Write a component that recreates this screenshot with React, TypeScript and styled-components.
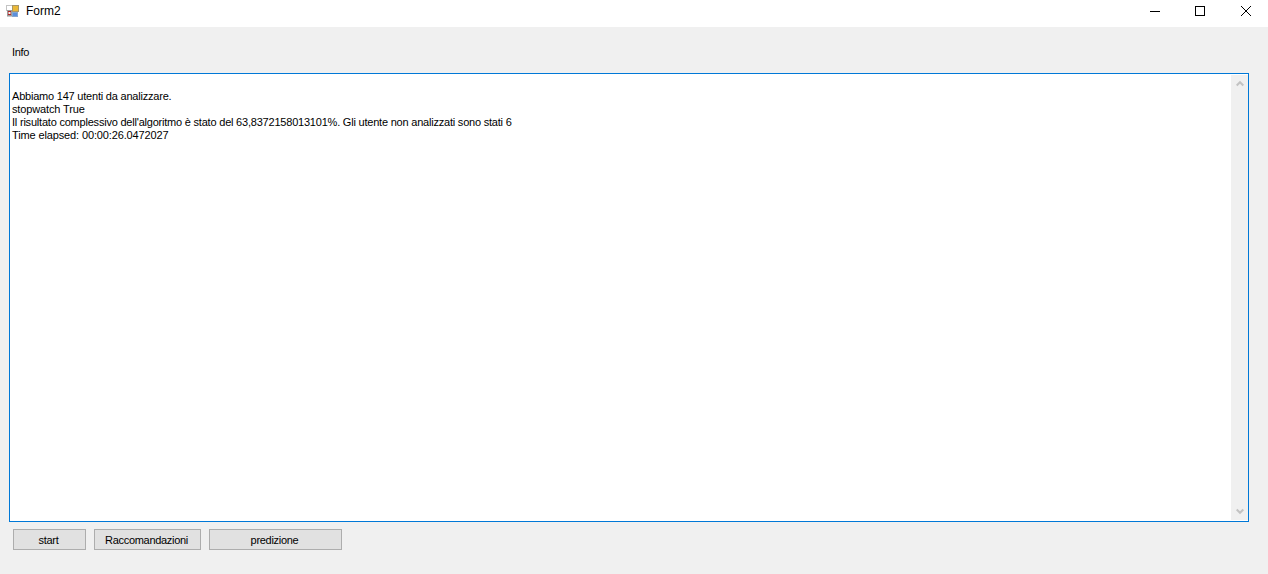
import React from "react";
import styled, { createGlobalStyle } from "styled-components";

const Global = createGlobalStyle`
  html, body { margin: 0; padding: 0; background: #f0f0f0; overflow: hidden; }
  * { box-sizing: border-box; }
`;

const Window = styled.div`
  width: 1268px;
  height: 574px;
  display: flex;
  flex-direction: column;
  background: #f0f0f0;
  font-family: "Liberation Sans", Arial, sans-serif;
  font-size: 11px;
  letter-spacing: -0.2px;
  color: #000;
`;

const TitleBar = styled.header`
  height: 27px;
  flex: none;
  display: flex;
  align-items: flex-start;
  background: #fff;
`;

const AppIcon = styled.svg`
  width: 14px;
  height: 14px;
  margin: 4px 0 0 6px;
  flex: none;
`;

const Title = styled.span`
  margin: 4px 0 0 6px;
  font-size: 12px;
  letter-spacing: 0;
  line-height: 15px;
  flex: 1;
`;

const Controls = styled.div`
  display: flex;
`;

const ControlButton = styled.div<{ $w: number }>`
  width: ${(p) => p.$w}px;
  height: 22px;
  display: flex;
  align-items: center;
  justify-content: center;
`;

const Content = styled.main`
  flex: 1;
  display: flex;
  flex-direction: column;
  padding: 19px 19px 0 9px;
`;

const MenuLabel = styled.div`
  padding-left: 3px;
  line-height: 13px;
  height: 27px;
  letter-spacing: -0.3px;
`;

const TextArea = styled.div`
  height: 449px;
  width: 1240px;
  flex: none;
  border: 1px solid #0078d7;
  background: #fff;
  display: flex;
`;

const Output = styled.div`
  flex: 1;
  padding: 16px 0 0 2px;
`;

const Line = styled.div<{ $tight?: boolean }>`
  line-height: 13px;
  white-space: pre;
  letter-spacing: ${(p) => (p.$tight ? "-0.13px" : "-0.21px")};
`;

const ScrollTrack = styled.div`
  width: 17px;
  margin: 1px 0;
  background: #f0f0f0;
  display: flex;
  flex-direction: column;
  justify-content: space-between;
`;

const ScrollArrow = styled.div`
  height: 17px;
  display: flex;
  align-items: center;
  justify-content: center;
`;

const ButtonRow = styled.div`
  display: flex;
  gap: 8px;
  margin: 7px 0 0 4px;
`;

const FormButton = styled.button<{ $w: number }>`
  width: ${(p) => p.$w}px;
  height: 21px;
  padding: 1px 2px 0 0;
  border: 1px solid #adadad;
  background: #e1e1e1;
  font: inherit;
  letter-spacing: -0.3px;
  color: #000;
  line-height: 18px;
  text-align: center;
`;

const Chevron = ({ up }: { up?: boolean }) => (
  <svg width="8" height="7" viewBox="0 0 8 7">
    <path
      d={up ? "M0.7 5.5 L4 2.2 L7.3 5.5" : "M0.7 1.5 L4 4.8 L7.3 1.5"}
      fill="none"
      stroke="#c2c2c2"
      strokeWidth="2"
    />
  </svg>
);

export default function App() {
  return (
    <Window>
      <Global />
      <TitleBar>
        <AppIcon viewBox="0 0 14 14">
          <rect x="0.5" y="1.5" width="6" height="5" fill="#fff" stroke="#c4c4c4" strokeWidth="1" />
          <rect x="1.5" y="6.5" width="4" height="5" fill="#b52525" stroke="#9a9a9a" strokeWidth="1" />
          <rect x="2.5" y="8" width="2" height="2" fill="#f4f4f4" />
          <rect x="1" y="12" width="5" height="1" fill="#c8c8c8" />
          <rect x="6.5" y="1.5" width="6" height="6" fill="#eab838" stroke="#a6966a" strokeWidth="1" />
          <rect x="6.5" y="8.5" width="5" height="4" fill="#5a8fdc" stroke="#85a5d0" strokeWidth="1" />
        </AppIcon>
        <Title>Form2</Title>
        <Controls>
          <ControlButton $w={42}>
            <svg width="10" height="10" viewBox="0 0 10 10">
              <path d="M0 5.5H10" stroke="#000" strokeWidth="1" />
            </svg>
          </ControlButton>
          <ControlButton $w={48}>
            <svg width="10" height="10" viewBox="0 0 10 10">
              <rect x="0.5" y="0.5" width="9" height="9" fill="none" stroke="#000" strokeWidth="1" />
            </svg>
          </ControlButton>
          <ControlButton $w={44}>
            <svg width="10" height="10" viewBox="0 0 10 10">
              <path d="M0 0L10 10M10 0L0 10" stroke="#000" strokeWidth="1" />
            </svg>
          </ControlButton>
        </Controls>
      </TitleBar>
      <Content>
        <MenuLabel>Info</MenuLabel>
        <TextArea>
          <Output>
            <Line>Abbiamo 147 utenti da analizzare.</Line>
            <Line $tight>stopwatch True</Line>
            <Line>Il risultato complessivo dell'algoritmo è stato del 63,8372158013101%. Gli utente non analizzati sono stati 6</Line>
            <Line $tight>Time elapsed: 00:00:26.0472027</Line>
          </Output>
          <ScrollTrack>
            <ScrollArrow><Chevron up /></ScrollArrow>
            <ScrollArrow><Chevron /></ScrollArrow>
          </ScrollTrack>
        </TextArea>
        <ButtonRow>
          <FormButton $w={73}>start</FormButton>
          <FormButton $w={107}>Raccomandazioni</FormButton>
          <FormButton $w={133}>predizione</FormButton>
        </ButtonRow>
      </Content>
    </Window>
  );
}
